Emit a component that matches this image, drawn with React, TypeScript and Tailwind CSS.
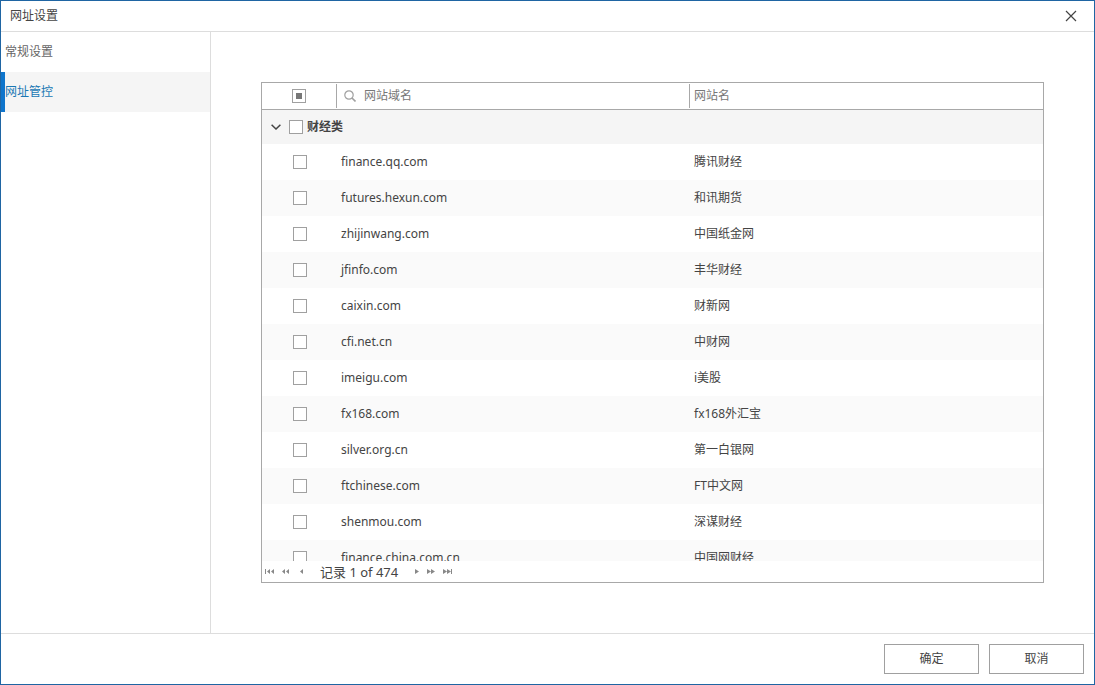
import { useEffect, useRef, useState } from "react";

const sites = [
  ["finance.qq.com", "腾讯财经"],
  ["futures.hexun.com", "和讯期货"],
  ["zhijinwang.com", "中国纸金网"],
  ["jfinfo.com", "丰华财经"],
  ["caixin.com", "财新网"],
  ["cfi.net.cn", "中财网"],
  ["imeigu.com", "i美股"],
  ["fx168.com", "fx168外汇宝"],
  ["silver.org.cn", "第一白银网"],
  ["ftchinese.com", "FT中文网"],
  ["shenmou.com", "深谋财经"],
  ["finance.china.com.cn", "中国网财经"],
];

const boxClass =
  "block size-3.5 shrink-0 appearance-none border border-[#a0a0a0] bg-white shadow-[inset_0_0_0_3px_#ffffff] checked:bg-[#777777] indeterminate:bg-[#777777]";

function HeaderCheckbox() {
  const ref = useRef<HTMLInputElement>(null);
  useEffect(() => {
    if (ref.current) ref.current.indeterminate = true;
  }, []);
  return <input ref={ref} type="checkbox" aria-label="全选" className={boxClass} />;
}

function PagerButton({ label, width, shapes }: { label: string; width: number; shapes: string }) {
  return (
    <button type="button" aria-label={label} className="flex h-5 items-center text-[#888888]">
      <svg width={width} height="5" viewBox={`0 0 ${width} 5`} fill="currentColor">
        <path d={shapes} />
      </svg>
    </button>
  );
}

export default function App() {
  const [open, setOpen] = useState(true);

  return (
    <div className="flex h-screen flex-col border border-[#1f65a3] bg-white font-['Noto_Sans','Noto_Sans_CJK_SC',sans-serif] text-xs text-[#444444]">
      <header className="flex h-[31px] shrink-0 items-center justify-between border-b border-[#dddddd] pr-4 pl-[9px]">
        <h1>网址设置</h1>
        <button type="button" aria-label="关闭" className="p-px">
          <svg width="12" height="12" viewBox="0 0 12 12" stroke="#444444" strokeWidth="1.2" fill="none">
            <path d="M1 1l10 10M11 1L1 11" />
          </svg>
        </button>
      </header>

      <div className="flex min-h-0 flex-1">
        <nav className="flex w-[210px] shrink-0 flex-col border-r border-[#dddddd]">
          <a href="#general" className="flex h-10 items-center pl-1 text-[#666666]">
            常规设置
          </a>
          <a href="#sites" aria-current="page" className="flex h-10 items-center border-l-4 border-[#0f75cc] bg-[#f5f5f5] text-[#1a78b4]">
            网址管控
          </a>
        </nav>

        <main className="flex min-w-0 flex-1 p-[50px]">
          <section className="flex min-w-0 flex-1 flex-col border border-[#a8a8a8]">
            <div className="min-h-0 flex-1 overflow-hidden">
              <table className="w-full table-fixed border-separate border-spacing-0 text-left">
                <colgroup>
                  <col className="w-[75px]" />
                  <col className="w-[353px]" />
                  <col />
                </colgroup>
                <thead className="text-[#777777]">
                  <tr className="h-[27px]">
                    <th className="border-b border-[#a8a8a8] p-0 py-px font-normal">
                      <div className="flex h-6 items-center border-r border-[#a8a8a8] pl-[30px]">
                        <HeaderCheckbox />
                      </div>
                    </th>
                    <th className="border-b border-[#a8a8a8] p-0 py-px font-normal">
                      <div className="flex h-6 items-center gap-2 border-r border-[#a8a8a8] pl-[7px]">
                        <svg width="12" height="12" viewBox="0 0 12 12" fill="none" stroke="#a0a0a0" strokeWidth="1.2">
                          <circle cx="5" cy="5" r="4.2" />
                          <path d="M8 8l3.5 3.5" strokeWidth="1.6" />
                        </svg>
                        网站域名
                      </div>
                    </th>
                    <th className="border-b border-[#a8a8a8] p-0 pl-1 font-normal">网站名</th>
                  </tr>
                </thead>
                <tbody>
                  <tr className="h-[34px] bg-[#f5f5f5]">
                    <td colSpan={3} className="p-0">
                      <div className="flex items-center pl-2">
                        <button
                          type="button"
                          aria-label="展开或收起财经类"
                          aria-expanded={open}
                          onClick={() => setOpen(!open)}
                          className="mr-[7px] flex h-4 w-3 items-center justify-center"
                        >
                          <svg width="10" height="6" viewBox="0 0 10 6" fill="none" stroke="#444444" strokeWidth="1.5">
                            <path d="M.6.7L5 5 9.4.7" />
                          </svg>
                        </button>
                        <label className="flex items-center gap-1 font-bold">
                          <input type="checkbox" className={boxClass} />
                          财经类
                        </label>
                      </div>
                    </td>
                  </tr>
                  {open &&
                    sites.map(([domain, name], i) => (
                      <tr key={domain} className="h-9 even:bg-white odd:bg-[#fafafa]">
                        <td className="p-0 pl-[31px]">
                          <input id={`site-${i}`} type="checkbox" className={boxClass} />
                        </td>
                        <td className="p-0 pl-1">
                          <label htmlFor={`site-${i}`}>{domain}</label>
                        </td>
                        <td className="p-0 pl-1">{name}</td>
                      </tr>
                    ))}
                </tbody>
              </table>
            </div>
            <div className="flex h-[21px] shrink-0 items-center pl-[3px]">
              <div className="flex items-center gap-2">
                <PagerButton label="第一页" width={9} shapes="M0 0h1v5h-1zM5 0v5L2 2.5zM9 0v5L6 2.5z" />
                <PagerButton label="向前翻页" width={7} shapes="M3 0v5L0 2.5zM7 0v5L4 2.5z" />
                <div className="pl-[3px]">
                  <PagerButton label="上一条" width={3} shapes="M3 0v5L0 2.5z" />
                </div>
              </div>
              <span className="px-[17px] text-[13px] leading-[18px]">记录 1 of 474</span>
              <div className="flex items-center gap-2 text-[#777777]">
                <PagerButton label="下一条" width={4} shapes="M0 0v5L4 2.5z" />
                <PagerButton label="向后翻页" width={8} shapes="M0 0v5L4 2.5zM4 0v5L8 2.5z" />
                <PagerButton label="最后一页" width={9} shapes="M0 0v5L4 2.5zM4 0v5L8 2.5zM8 0h1v5h-1z" />
              </div>
            </div>
          </section>
        </main>
      </div>

      <footer className="flex h-[51px] shrink-0 items-center justify-end gap-2.5 border-t border-[#dddddd] px-2.5">
        <button type="button" className="h-[30px] w-[95px] border border-[#a0a0a0] bg-white">
          确定
        </button>
        <button type="button" className="h-[30px] w-[95px] border border-[#a0a0a0] bg-white">
          取消
        </button>
      </footer>
    </div>
  );
}
